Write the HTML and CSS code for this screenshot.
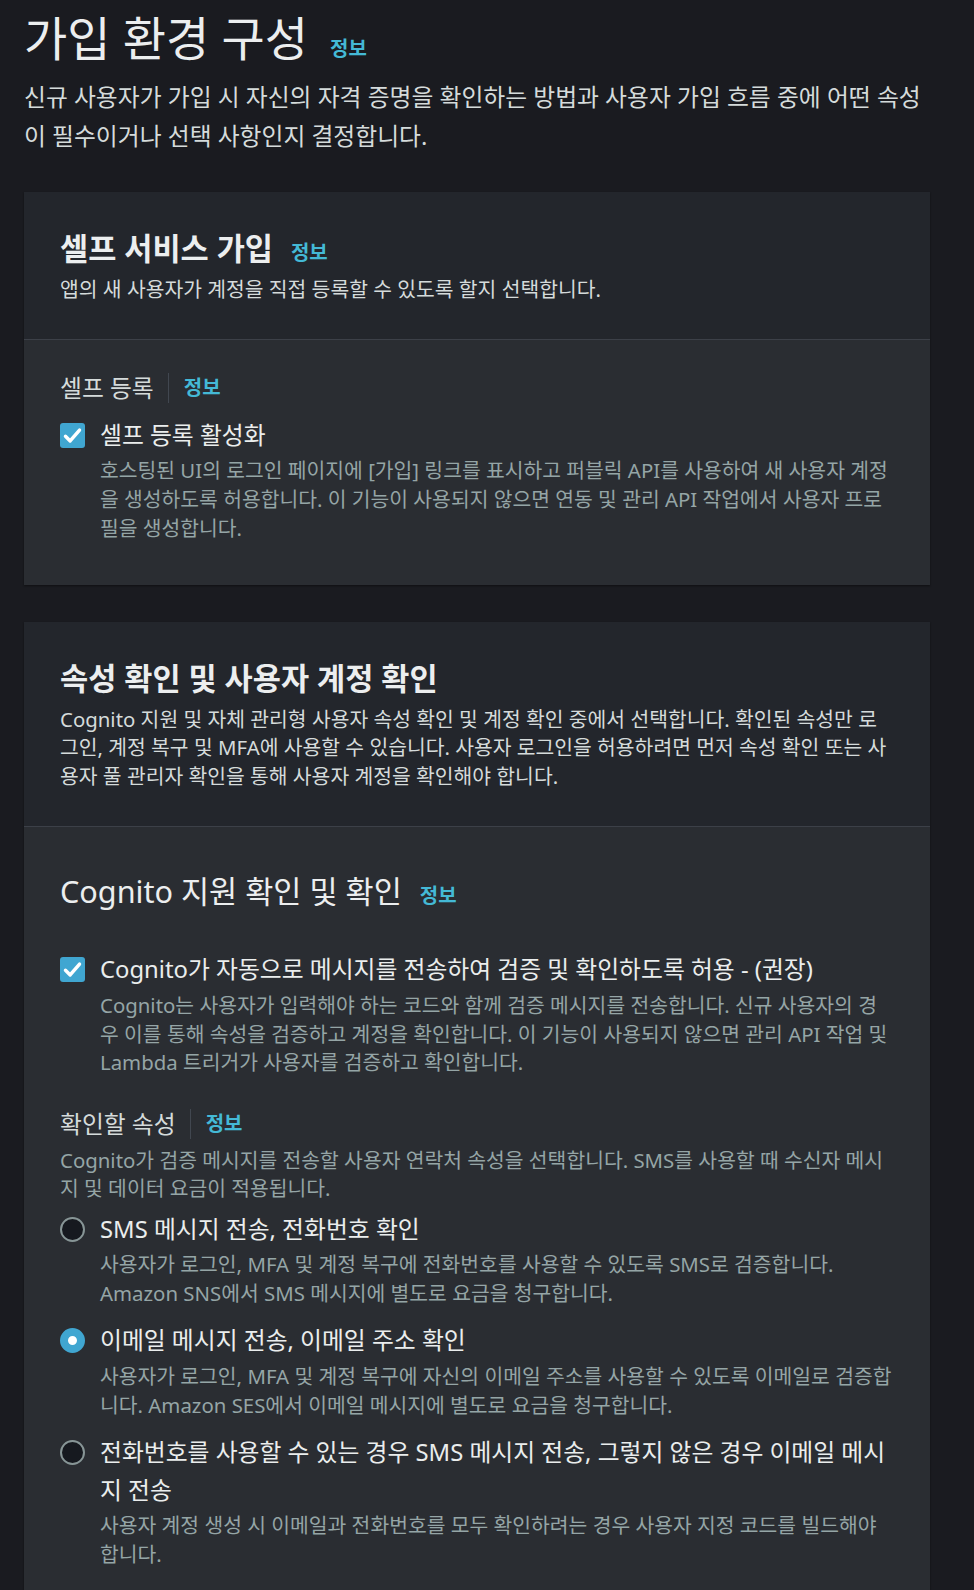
FILE: index.html
```html
<!DOCTYPE html>
<html lang="ko">
<head>
<meta charset="utf-8">
<title>가입 환경 구성</title>
<link rel="stylesheet" href="styles.css">
</head>
<body>
<main class="page">
  <h1 class="page-title">가입 환경 구성 <a class="info" href="#">정보</a></h1>
  <p class="page-desc">신규 사용자가 가입 시 자신의 자격 증명을 확인하는 방법과 사용자 가입 흐름 중에 어떤 속성이 필수이거나 선택 사항인지 결정합니다.</p>

  <section class="card card-first">
    <header class="card-head">
      <h2 class="card-title">셀프 서비스 가입 <a class="info" href="#">정보</a></h2>
      <p class="card-desc">앱의 새 사용자가 계정을 직접 등록할 수 있도록 할지 선택합니다.</p>
    </header>
    <div class="card-body">
      <div class="field-label"><span>셀프 등록</span><span class="sep"></span><a class="info" href="#">정보</a></div>
      <div class="control control-first">
        <span class="checkbox"><svg viewBox="0 0 16 16" width="25" height="25"><polyline points="3.5,8.5 6.5,11.5 12.5,4.5" fill="none" stroke="#fff" stroke-width="2.2" stroke-linecap="round" stroke-linejoin="round"/></svg></span>
        <div class="control-text">
          <div class="control-label">셀프 등록 활성화</div>
          <div class="control-desc">호스팅된 UI의 로그인 페이지에 [가입] 링크를 표시하고 퍼블릭 API를 사용하여 새 사용자 계정을 생성하도록 허용합니다. 이 기능이 사용되지 않으면 연동 및 관리 API 작업에서 사용자 프로필을 생성합니다.</div>
        </div>
      </div>
    </div>
  </section>

  <section class="card">
    <header class="card-head">
      <h2 class="card-title">속성 확인 및 사용자 계정 확인</h2>
      <p class="card-desc">Cognito 지원 및 자체 관리형 사용자 속성 확인 및 계정 확인 중에서 선택합니다. 확인된 속성만 로그인, 계정 복구 및 MFA에 사용할 수 있습니다. 사용자 로그인을 허용하려면 먼저 속성 확인 또는 사용자 풀 관리자 확인을 통해 사용자 계정을 확인해야 합니다.</p>
    </header>
    <div class="card-body">
      <h3 class="sub-title">Cognito 지원 확인 및 확인 <a class="info" href="#">정보</a></h3>
      <div class="control control-auto">
        <span class="checkbox"><svg viewBox="0 0 16 16" width="25" height="25"><polyline points="3.5,8.5 6.5,11.5 12.5,4.5" fill="none" stroke="#fff" stroke-width="2.2" stroke-linecap="round" stroke-linejoin="round"/></svg></span>
        <div class="control-text">
          <div class="control-label">Cognito가 자동으로 메시지를 전송하여 검증 및 확인하도록 허용 - (권장)</div>
          <div class="control-desc">Cognito는 사용자가 입력해야 하는 코드와 함께 검증 메시지를 전송합니다. 신규 사용자의 경우 이를 통해 속성을 검증하고 계정을 확인합니다. 이 기능이 사용되지 않으면 관리 API 작업 및 Lambda 트리거가 사용자를 검증하고 확인합니다.</div>
        </div>
      </div>

      <div class="field-label field-attr"><span>확인할 속성</span><span class="sep"></span><a class="info" href="#">정보</a></div>
      <div class="field-desc">Cognito가 검증 메시지를 전송할 사용자 연락처 속성을 선택합니다. SMS를 사용할 때 수신자 메시지 및 데이터 요금이 적용됩니다.</div>

      <div class="radios">
        <div class="control">
          <span class="radio"></span>
          <div class="control-text">
            <div class="control-label">SMS 메시지 전송, 전화번호 확인</div>
            <div class="control-desc">사용자가 로그인, MFA 및 계정 복구에 전화번호를 사용할 수 있도록 SMS로 검증합니다. Amazon SNS에서 SMS 메시지에 별도로 요금을 청구합니다.</div>
          </div>
        </div>
        <div class="control">
          <span class="radio radio-on"></span>
          <div class="control-text">
            <div class="control-label">이메일 메시지 전송, 이메일 주소 확인</div>
            <div class="control-desc">사용자가 로그인, MFA 및 계정 복구에 자신의 이메일 주소를 사용할 수 있도록 이메일로 검증합니다. Amazon SES에서 이메일 메시지에 별도로 요금을 청구합니다.</div>
          </div>
        </div>
        <div class="control">
          <span class="radio"></span>
          <div class="control-text">
            <div class="control-label">전화번호를 사용할 수 있는 경우 SMS 메시지 전송, 그렇지 않은 경우 이메일 메시지 전송</div>
            <div class="control-desc">사용자 계정 생성 시 이메일과 전화번호를 모두 확인하려는 경우 사용자 지정 코드를 빌드해야 합니다.</div>
          </div>
        </div>
      </div>
    </div>
  </section>
</main>
</body>
</html>
```

FILE: styles.css
```css
* { box-sizing: border-box; }

html, body {
  margin: 0;
  padding: 0;
  background: #1a1b20;
}

body {
  font-family: "Noto Sans", "Noto Sans CJK KR", sans-serif;
  color: #eaeded;
  overflow: hidden;
}

.page {
  padding: 0 44px 60px 24px;
}

.info {
  font-size: 20px;
  line-height: 1;
  font-weight: 700;
  color: #44b9d6;
  text-decoration: none;
  margin-left: 10px;
}

.page-title {
  margin: 10px 0 0;
  font-size: 47px;
  line-height: 56px;
  font-weight: 400;
  color: #eceeef;
}

.page-desc {
  margin: 11.5px 0 0;
  font-size: 23.8px;
  line-height: 39px;
  color: #d5dbdb;
}

.card {
  margin-top: 37px;
  background: #2a2d32;
  box-shadow: 0 1px 2px rgba(0, 0, 0, 0.45);
}

.card-first {
  margin-top: 36.5px;
}

.card-head {
  background: #23262c;
  padding: 38px 36px 35.5px;
  border-bottom: 1px solid #3c4048;
}

.card-title {
  margin: 0;
  font-size: 30.6px;
  line-height: 36px;
  font-weight: 700;
  color: #eceeef;
}

.card-desc {
  margin: 8.5px 0 0;
  font-size: 20.4px;
  line-height: 28.7px;
  color: #d5dbdb;
}

.card-body {
  padding: 32px 36px 42.5px;
}

.field-label {
  display: flex;
  align-items: center;
  font-size: 23.8px;
  line-height: 32px;
  color: #d5dbdb;
}

.field-label .sep {
  width: 1px;
  height: 30px;
  background: #414750;
  margin: 0 0 0 14px;
}

.field-label .info {
  margin-left: 15px;
}

.control {
  display: flex;
  gap: 15px;
}

.control-first {
  margin-top: 13.25px;
}

.control-text {
  flex: 1;
  min-width: 0;
}

.control-label {
  font-size: 23.8px;
  line-height: 37.5px;
  color: #eaeded;
}

.control-desc {
  margin-top: 2px;
  font-size: 20.4px;
  line-height: 28.7px;
  color: #95a5a6;
}

.checkbox {
  flex: none;
  width: 25px;
  height: 25px;
  margin-top: 5.75px;
  border-radius: 3px;
  background: #40a6d1;
  display: flex;
}

.radio {
  flex: none;
  width: 25px;
  height: 25px;
  margin-top: 5.75px;
  border-radius: 50%;
  border: 2px solid #879596;
  background: #16191f;
}

.radio-on {
  border: 8px solid #40a6d1;
  background: #ffffff;
}

.sub-title {
  margin: 13.5px 0 0;
  font-size: 30.6px;
  line-height: 36px;
  font-weight: 400;
  color: #eceeef;
}

.control-auto {
  margin-top: 42.75px;
}

.field-attr {
  margin-top: 30.75px;
}

.field-desc {
  margin-top: 6px;
  font-size: 20.4px;
  line-height: 28.7px;
  color: #95a5a6;
}

.radios {
  margin-top: 7.7px;
  display: flex;
  flex-direction: column;
  gap: 14.7px;
}
```
